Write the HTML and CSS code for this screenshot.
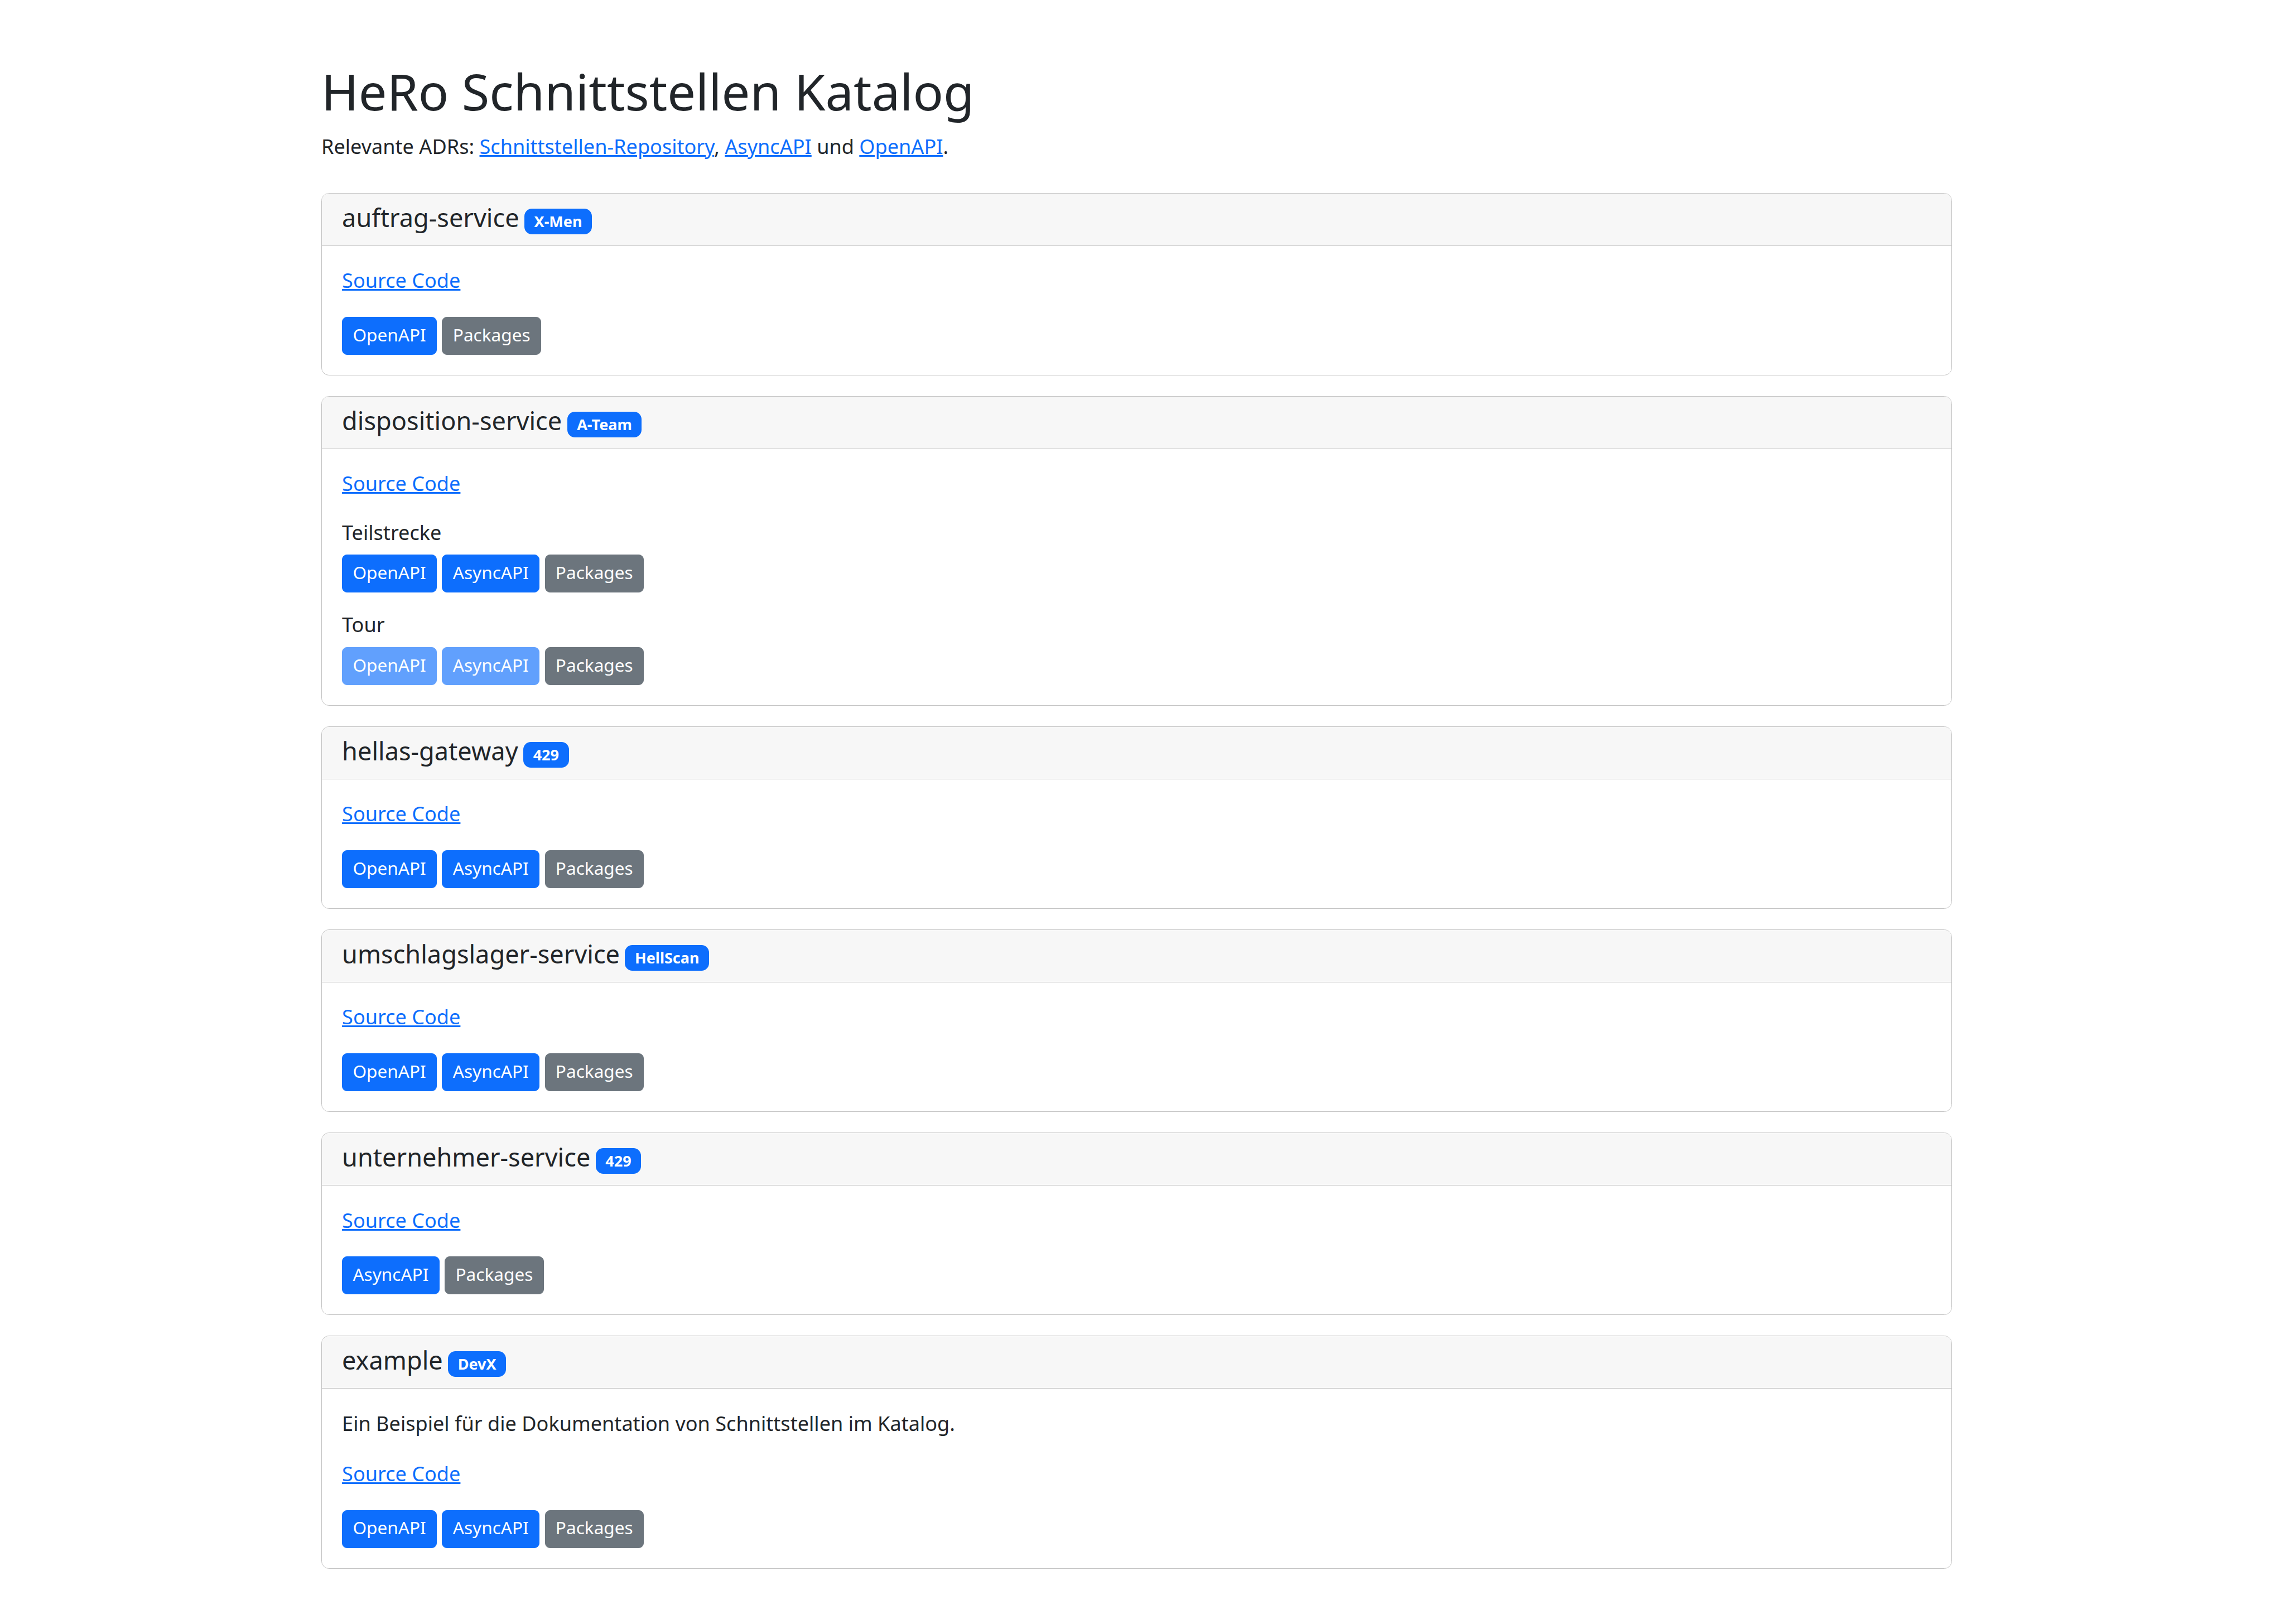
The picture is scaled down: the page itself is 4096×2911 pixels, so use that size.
FILE: index.html
```html
<!DOCTYPE html>
<html lang="de">
<head>
    <meta charset="UTF-8">
    <meta name="viewport" content="width=device-width, initial-scale=1.0">
    <title>HeRo Schnittstellen Katalog</title>
    <link rel="stylesheet" href="styles.css">
</head>
<body>
    <main class="container">
        <h1>HeRo Schnittstellen Katalog</h1>
        <p class="intro">Relevante ADRs: <a href="#">Schnittstellen-Repository</a>, <a href="#">AsyncAPI</a> und <a href="#">OpenAPI</a>.</p>

        <section class="card">
            <div class="card-header">
                <span class="card-title">auftrag-service</span>
                <span class="badge">X-Men</span>
            </div>
            <div class="card-body">
                <p><a href="#">Source Code</a></p>
                <div class="buttons">
                    <a class="btn btn-primary" href="#">OpenAPI</a>
                    <a class="btn btn-secondary" href="#">Packages</a>
                </div>
            </div>
        </section>

        <section class="card">
            <div class="card-header">
                <span class="card-title">disposition-service</span>
                <span class="badge">A-Team</span>
            </div>
            <div class="card-body">
                <p><a href="#">Source Code</a></p>
                <h2>Teilstrecke</h2>
                <div class="buttons">
                    <a class="btn btn-primary" href="#">OpenAPI</a>
                    <a class="btn btn-primary" href="#">AsyncAPI</a>
                    <a class="btn btn-secondary" href="#">Packages</a>
                </div>
                <h2>Tour</h2>
                <div class="buttons">
                    <a class="btn btn-primary disabled">OpenAPI</a>
                    <a class="btn btn-primary disabled">AsyncAPI</a>
                    <a class="btn btn-secondary" href="#">Packages</a>
                </div>
            </div>
        </section>

        <section class="card">
            <div class="card-header">
                <span class="card-title">hellas-gateway</span>
                <span class="badge">429</span>
            </div>
            <div class="card-body">
                <p><a href="#">Source Code</a></p>
                <div class="buttons">
                    <a class="btn btn-primary" href="#">OpenAPI</a>
                    <a class="btn btn-primary" href="#">AsyncAPI</a>
                    <a class="btn btn-secondary" href="#">Packages</a>
                </div>
            </div>
        </section>

        <section class="card">
            <div class="card-header">
                <span class="card-title">umschlagslager-service</span>
                <span class="badge">HellScan</span>
            </div>
            <div class="card-body">
                <p><a href="#">Source Code</a></p>
                <div class="buttons">
                    <a class="btn btn-primary" href="#">OpenAPI</a>
                    <a class="btn btn-primary" href="#">AsyncAPI</a>
                    <a class="btn btn-secondary" href="#">Packages</a>
                </div>
            </div>
        </section>

        <section class="card">
            <div class="card-header">
                <span class="card-title">unternehmer-service</span>
                <span class="badge">429</span>
            </div>
            <div class="card-body">
                <p><a href="#">Source Code</a></p>
                <div class="buttons">
                    <a class="btn btn-primary" href="#">AsyncAPI</a>
                    <a class="btn btn-secondary" href="#">Packages</a>
                </div>
            </div>
        </section>

        <section class="card">
            <div class="card-header">
                <span class="card-title">example</span>
                <span class="badge">DevX</span>
            </div>
            <div class="card-body">
                <p>Ein Beispiel für die Dokumentation von Schnittstellen im Katalog.</p>
                <p><a href="#">Source Code</a></p>
                <div class="buttons">
                    <a class="btn btn-primary" href="#">OpenAPI</a>
                    <a class="btn btn-primary" href="#">AsyncAPI</a>
                    <a class="btn btn-secondary" href="#">Packages</a>
                </div>
            </div>
        </section>
    </main>
</body>
</html>
```
FILE: styles.css
```css
* {
    box-sizing: border-box;
}

html {
    font-size: 36.08px;
}

body {
    margin: 0;
    padding: 109px 597px 0 576px;
    background-color: #fff;
    color: #212529;
    font-family: "Noto Sans", "Liberation Sans", sans-serif;
    font-size: 1rem;
    line-height: 1.5;
}

h1 {
    margin: 0 0 0.5rem;
    font-size: 2.5rem;
    font-weight: 400;
    line-height: 1.2;
}

h2 {
    margin: 0 0 0.5rem;
    font-size: 1rem;
    font-weight: 400;
    line-height: 1.2;
}

p {
    margin: 0 0 1rem;
}

a {
    color: #0d6efd;
}

.intro {
    margin-bottom: 1.56rem;
}

.card {
    margin-bottom: 1.018rem;
    border: 1px solid #c4c4c4;
    border-radius: 0.375rem;
    overflow: hidden;
}

.card-header {
    padding: 0.44rem 1rem 0.56rem;
    background-color: #f7f7f7;
    border-bottom: 1px solid #c4c4c4;
}

.card-title {
    font-size: 1.25rem;
    line-height: 1.2;
}

.badge {
    display: inline-block;
    padding: 0.32em 0.65em 0.38em;
    border-radius: 0.375rem;
    background-color: #0d6efd;
    color: #fff;
    font-size: 0.75rem;
    font-weight: 700;
    line-height: 1;
}

.card-body {
    padding: 0.95rem 1rem 1rem;
}

.buttons {
    padding-top: 0.07rem;
}

p + h2 {
    margin-top: 1.08rem;
}

.buttons + h2 {
    margin-top: 1rem;
}

h2 + .buttons {
    padding-top: 0.01rem;
}

.btn {
    display: inline-block;
    padding: 0.19rem 0.508rem 0.326rem;
    border: 1px solid transparent;
    border-radius: 0.25rem;
    color: #fff;
    font-size: 0.875rem;
    line-height: 1.5;
    text-decoration: none;
    vertical-align: middle;
}

.btn-primary {
    background-color: #0d6efd;
    border-color: #0d6efd;
}

.btn-secondary {
    background-color: #6c757d;
    border-color: #6c757d;
}

.disabled {
    opacity: 0.65;
}
```
